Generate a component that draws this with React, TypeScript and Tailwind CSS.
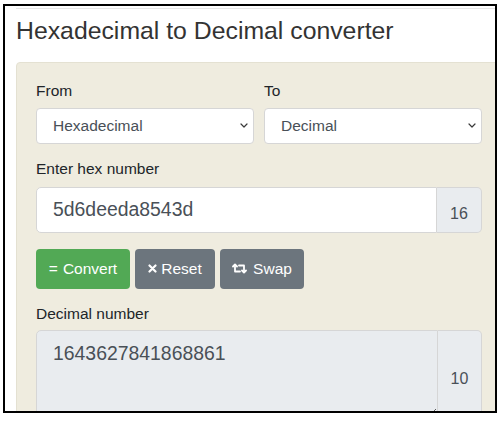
import React from "react";

function Chevron() {
  return (
    <svg width="8" height="5" viewBox="0 0 8 5" fill="none">
      <path d="M1 1l3 3 3-3" stroke="#3a3a3a" strokeWidth="1.2" strokeLinecap="round" strokeLinejoin="round" />
    </svg>
  );
}

function SwapIcon() {
  return (
    <svg width="15" height="11" viewBox="0 0 15 11" fill="none" stroke="white" strokeWidth="1.8" strokeLinecap="round" strokeLinejoin="round">
      <path d="M1 3.5L3 1.5L5 3.5" />
      <path d="M3 1.8V8.5H8" />
      <path d="M10 7.5L12 9.5L14 7.5" />
      <path d="M12 9.2V2.5H7" />
    </svg>
  );
}

function XIcon() {
  return (
    <svg width="9" height="9" viewBox="0 0 9 9" fill="none" stroke="white" strokeWidth="2.2" strokeLinecap="round">
      <path d="M1.5 1.5L7.5 7.5M7.5 1.5L1.5 7.5" />
    </svg>
  );
}

export default function App() {
  return (
    <div className="w-[504px] h-[422px] bg-white pt-[4px] pl-[3px] font-['Liberation_Sans',Arial,sans-serif]">
      <div className="w-[494px] h-[409px] border-2 border-black overflow-hidden pl-[11px] pt-[2px]">
        <div className="h-px w-[500px] bg-[#e6e6e6]" />
        <h1 className="mt-[8px] text-[24.8px] leading-[28.8px] text-[#333333] whitespace-nowrap">
          Hexadecimal to Decimal converter
        </h1>
        <div className="mt-[16px] w-[486px] rounded-[4px] border border-[#e4e1d2] bg-[#efecdf] p-[19px]">
          <div className="grid grid-cols-2 gap-x-[10px]">
            <div>
              <div className="text-[15.5px] leading-[18px] mb-[8px] text-[#212529]">From</div>
              <div className="h-[36px] rounded-[4px] border border-[#d6d6d6] bg-white flex items-center justify-between pl-[16px] pr-[5px] text-[15.5px] text-[#495057]">
                <span>Hexadecimal</span>
                <Chevron />
              </div>
            </div>
            <div>
              <div className="text-[15.5px] leading-[18px] mb-[8px] text-[#212529]">To</div>
              <div className="h-[36px] rounded-[4px] border border-[#d6d6d6] bg-white flex items-center justify-between pl-[16px] pr-[5px] text-[15.5px] text-[#495057]">
                <span>Decimal</span>
                <Chevron />
              </div>
            </div>
          </div>

          <div className="mt-[16px] mb-[9px] text-[15.5px] leading-[18px] text-[#212529]">Enter hex number</div>
          <div className="flex h-[46px]">
            <div className="flex-1 flex items-center bg-white border border-[#d6d6d6] rounded-l-[5px] px-[16px] text-[19.4px] text-[#495057]">
              5d6deeda8543d
            </div>
            <div className="w-[45px] flex items-center justify-center pt-[8px] bg-[#e9ecef] border border-l-0 border-[#d6d6d6] rounded-r-[5px] text-[16px] text-[#495057]">
              16
            </div>
          </div>

          <div className="mt-[16px] flex gap-[5px]">
            <button className="w-[94px] h-[40px] rounded-[4px] bg-[#52a955] text-white text-[15.5px] flex items-center justify-center gap-[5px]">
              <span>=</span>
              <span>Convert</span>
            </button>
            <button className="w-[80px] h-[40px] rounded-[4px] bg-[#6c757d] text-white text-[15.5px] flex items-center justify-center gap-[4px]">
              <XIcon />
              <span>Reset</span>
            </button>
            <button className="w-[84px] h-[40px] rounded-[4px] bg-[#6c757d] text-white text-[15.5px] flex items-center justify-center gap-[6px]">
              <SwapIcon />
              <span>Swap</span>
            </button>
          </div>

          <div className="mt-[16px] mb-[7px] text-[15.5px] leading-[18px] text-[#212529]">Decimal number</div>
          <div className="flex">
            <textarea
              readOnly
              value="1643627841868861"
              className="w-[402px] h-[88px] bg-[#e9ecef] border border-[#d6d6d6] rounded-l-[5px] px-[16px] py-[8px] text-[19.4px] leading-[1.5] text-[#495057] outline-none"
            />
            <div className="w-[44px] flex items-center justify-center pt-[10px] bg-[#e9ecef] border border-l-0 border-[#d6d6d6] rounded-r-[5px] text-[16px] text-[#495057]">
              10
            </div>
          </div>
        </div>
      </div>
    </div>
  );
}
